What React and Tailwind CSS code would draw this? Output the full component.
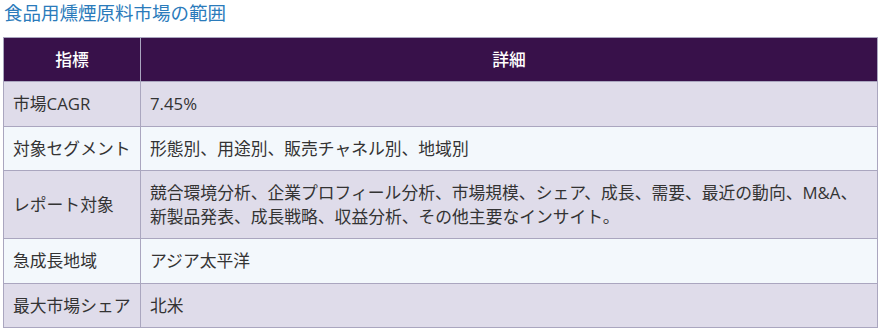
const ROWS = [
  ['市場CAGR', '7.45%'],
  ['対象セグメント', '形態別、用途別、販売チャネル別、地域別'],
  [
    'レポート対象',
    '競合環境分析、企業プロフィール分析、市場規模、シェア、成長、需要、最近の動向、M&A、新製品発表、成長戦略、収益分析、その他主要なインサイト。',
  ],
  ['急成長地域', 'アジア太平洋'],
  ['最大市場シェア', '北米'],
];

export default function App() {
  return (
    <div
      className="bg-white w-[883px] h-[331px] overflow-hidden"
      style={{ fontFamily: '"Open Sans", "Noto Sans CJK JP", sans-serif' }}
    >
      <h2 className="pl-[4px] pt-[1px] text-[18.5px] leading-[24px] text-[#2b7bbb] font-normal">
        食品用燻煙原料市場の範囲
      </h2>
      <table className="mt-[12px] ml-[3px] w-[875px] border-collapse text-[16.8px] leading-[23.5px] text-[#333]">
        <thead>
          <tr className="bg-[#38114a] text-white">
            <th className="w-[137px] h-[44px] border border-[#aaa6bf] font-medium text-center">指標</th>
            <th className="border border-[#aaa6bf] font-medium text-center">詳細</th>
          </tr>
        </thead>
        <tbody>
          {ROWS.map(([k, v], i) => (
            <tr key={k} className={i % 2 === 0 ? 'bg-[#dfdcea]' : 'bg-[#f3f8fc]'}>
              <td className="border border-[#aaa6bf] pl-[9px] pr-[4px] py-[10px] align-middle whitespace-nowrap">{k}</td>
              <td className="border border-[#aaa6bf] pl-[9px] pr-[6px] py-[10px] align-middle">{v}</td>
            </tr>
          ))}
        </tbody>
      </table>
    </div>
  );
}
